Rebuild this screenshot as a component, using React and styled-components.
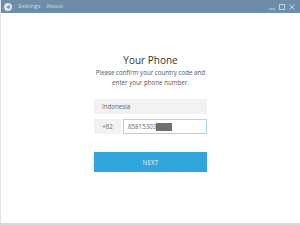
import React from "react";
import styled, { createGlobalStyle } from "styled-components";

const Global = createGlobalStyle`
  html, body { margin: 0; padding: 0; background: #d9d9d9; }
  body { font-family: "Open Sans", "Liberation Sans", sans-serif; }
`;

const Window = styled.div`
  width: 300px;
  height: 223px;
  display: flex;
  flex-direction: column;
  background: #ffffff;
  border-left: 1px solid #e4e4e4;
  box-sizing: border-box;
`;

const TitleBar = styled.div`
  height: 13px;
  background: #6d8daa;
  display: flex;
  align-items: center;
  padding: 0 5px 0 3px;
  gap: 6px;
`;

const Logo = styled.div`
  width: 8px;
  height: 8px;
  border-radius: 50%;
  background: #dbe6f0;
  display: flex;
  align-items: center;
  justify-content: center;
`;

const MenuItem = styled.span`
  font-size: 6px;
  color: #cfdbe7;
  line-height: 13px;
`;

const Spacer = styled.div`
  flex: 1;
`;

const Controls = styled.div`
  display: flex;
  align-items: center;
  gap: 4px;
`;

const Main = styled.div`
  flex: 1;
  display: flex;
  flex-direction: column;
  align-items: center;
  padding-top: 40px;
`;

const Title = styled.div`
  font-size: 10px;
  line-height: 14px;
  color: #333;
`;

const Subtitle = styled.div`
  margin-top: 1px;
  font-size: 6.2px;
  line-height: 10px;
  color: #555;
  text-align: center;
`;

const Form = styled.div`
  margin-top: 11px;
  width: 113px;
  display: flex;
  flex-direction: column;
  gap: 5px;
`;

const Field = styled.div`
  height: 15px;
  background: ${(p) => (p.$active ? "#ffffff" : "#f2f2f2")};
  border: 1px solid ${(p) => (p.$active ? "#a9d6ec" : "#f2f2f2")};
  box-sizing: border-box;
  display: flex;
  align-items: center;
  justify-content: ${(p) => (p.$center ? "center" : "flex-start")};
  padding-left: ${(p) => (p.$center ? "0" : p.$active ? "4px" : "7px")};
  font-size: 6.2px;
  color: #666;
  flex: ${(p) => (p.$grow ? 1 : "none")};
  width: ${(p) => p.$width || "auto"};
`;

const Row = styled.div`
  display: flex;
  gap: 2px;
`;

const Redact = styled.span`
  display: inline-block;
  width: 16px;
  height: 8px;
  background: #707070;
`;

const Button = styled.div`
  margin-top: 13px;
  height: 20px;
  background: #31a6de;
  color: #e8f5fc;
  font-size: 6.2px;
  display: flex;
  align-items: center;
  justify-content: center;
  letter-spacing: 0.2px;
`;

export default function App() {
  return (
    <>
      <Global />
      <Window>
        <TitleBar>
          <Logo>
            <svg width="6" height="6" viewBox="0 0 10 10">
              <path d="M1.5 5 L8.5 2 L7.2 8.5 L4.8 6.8 Z" fill="#6d8daa" />
            </svg>
          </Logo>
          <MenuItem>Settings</MenuItem>
          <MenuItem>About</MenuItem>
          <Spacer />
          <Controls>
            <svg width="6" height="6" viewBox="0 0 6 6">
              <line x1="0" y1="5" x2="6" y2="5" stroke="#c5d3e1" strokeWidth="1" />
            </svg>
            <svg width="6" height="6" viewBox="0 0 6 6">
              <rect x="0.5" y="0.5" width="5" height="5" fill="none" stroke="#c5d3e1" strokeWidth="1" />
            </svg>
            <svg width="6" height="6" viewBox="0 0 6 6">
              <path d="M0.5 0.5 L5.5 5.5 M5.5 0.5 L0.5 5.5" stroke="#c5d3e1" strokeWidth="1" />
            </svg>
          </Controls>
        </TitleBar>
        <Main>
          <Title>Your Phone</Title>
          <Subtitle>
            Please confirm your country code and
            <br />
            enter your phone number.
          </Subtitle>
          <Form>
            <Field>Indonesia</Field>
            <Row>
              <Field $center $width="27px">+62</Field>
              <Field $active $grow>
                85815303
                <Redact />
              </Field>
            </Row>
            <Button>NEXT</Button>
          </Form>
        </Main>
      </Window>
    </>
  );
}
